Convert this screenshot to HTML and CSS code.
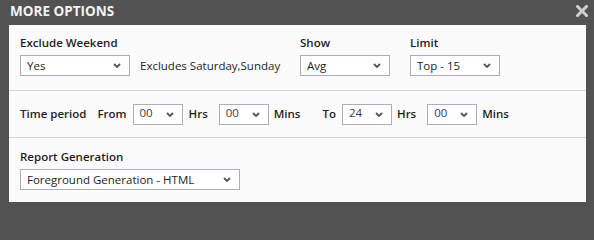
FILE: index.html
```html
<!DOCTYPE html>
<html>
<head>
<meta charset="utf-8">
<link rel="stylesheet" href="styles.css">
</head>
<body>
<div class="dialog">
  <div class="titlebar">
    <span class="title">MORE OPTIONS</span>
    <svg class="close" width="12" height="12" viewBox="0 0 12 12"><path d="M1.5 1.5 L10.5 10.5 M10.5 1.5 L1.5 10.5" stroke="#cfcfcf" stroke-width="3" stroke-linecap="square"/></svg>
  </div>
  <div class="panel">
    <div class="section sec-top">
      <div class="field f-weekend">
        <div class="label">Exclude Weekend</div>
        <div class="inline">
          <div class="select w110"><span>Yes</span><svg class="chev" width="8" height="5" viewBox="0 0 8 5"><path d="M1 1 L4 4 L7 1" fill="none" stroke="#555" stroke-width="1.8"/></svg></div>
          <span class="note">Excludes Saturday,Sunday</span>
        </div>
      </div>
      <div class="field f-show">
        <div class="label">Show</div>
        <div class="select w90"><span>Avg</span><svg class="chev" width="8" height="5" viewBox="0 0 8 5"><path d="M1 1 L4 4 L7 1" fill="none" stroke="#555" stroke-width="1.8"/></svg></div>
      </div>
      <div class="field">
        <div class="label">Limit</div>
        <div class="select w90"><span>Top - 15</span><svg class="chev" width="8" height="5" viewBox="0 0 8 5"><path d="M1 1 L4 4 L7 1" fill="none" stroke="#555" stroke-width="1.8"/></svg></div>
      </div>
    </div>
    <div class="section sec-time">
      <span class="label tp">Time period</span>
      <span class="label from">From</span>
      <div class="select w50"><span class="num">00</span><svg class="chev" width="8" height="5" viewBox="0 0 8 5"><path d="M1 1 L4 4 L7 1" fill="none" stroke="#555" stroke-width="1.8"/></svg></div>
      <span class="label unit">Hrs</span>
      <div class="select w50"><span class="num">00</span><svg class="chev" width="8" height="5" viewBox="0 0 8 5"><path d="M1 1 L4 4 L7 1" fill="none" stroke="#555" stroke-width="1.8"/></svg></div>
      <span class="label unit2">Mins</span>
      <span class="label to">To</span>
      <div class="select w50"><span class="num">24</span><svg class="chev" width="8" height="5" viewBox="0 0 8 5"><path d="M1 1 L4 4 L7 1" fill="none" stroke="#555" stroke-width="1.8"/></svg></div>
      <span class="label unit3">Hrs</span>
      <div class="select w50"><span class="num">00</span><svg class="chev" width="8" height="5" viewBox="0 0 8 5"><path d="M1 1 L4 4 L7 1" fill="none" stroke="#555" stroke-width="1.8"/></svg></div>
      <span class="label unit2">Mins</span>
    </div>
    <div class="section sec-report">
      <div class="label">Report Generation</div>
      <div class="select w220"><span>Foreground Generation - HTML</span><svg class="chev" width="8" height="5" viewBox="0 0 8 5"><path d="M1 1 L4 4 L7 1" fill="none" stroke="#555" stroke-width="1.8"/></svg></div>
    </div>
  </div>
</div>
</body>
</html>
```
FILE: styles.css
```css
html, body {
  margin: 0;
  padding: 0;
  background: #525252;
}
body {
  font-family: "Open Sans", "Noto Sans", "DejaVu Sans", sans-serif;
  font-size: 11.5px;
  color: #1e1e1e;
}
.dialog {
  width: 594px;
  height: 211px;
  background: #525252;
  box-sizing: border-box;
  padding: 0 8px 0 9px;
}
.titlebar {
  height: 25px;
  display: flex;
  align-items: center;
  justify-content: space-between;
  margin-left: 1px;
  margin-right: -2px;
}
.title {
  color: #f2f2f2;
  font-weight: 700;
  font-size: 13.5px;
  line-height: 18px;
  margin-top: -3px;
}
.close {
  margin-top: -3px;
}
.panel {
  background: #fbfbfb;
  height: 177px;
}
.section {
  padding-left: 11px;
  box-sizing: border-box;
}
.sec-top {
  height: 66px;
  display: grid;
  grid-template-columns: 280px 110px auto;
  padding-top: 10px;
  border-bottom: 1px solid #d6d6d6;
}
.sec-time {
  height: 47px;
  display: flex;
  align-items: center;
  border-bottom: 1px solid #d6d6d6;
}
.sec-report {
  padding-top: 11px;
}
.label {
  font-weight: 600;
  line-height: 16px;
  white-space: nowrap;
}
.field .label,
.sec-report .label {
  margin-bottom: 4px;
}
.inline {
  display: flex;
  align-items: center;
}
.note {
  margin-left: 10px;
  white-space: nowrap;
}
.select {
  height: 21px;
  box-sizing: border-box;
  border: 1px solid #a9aeb8;
  background: #fff;
  display: flex;
  align-items: center;
  justify-content: space-between;
  padding: 0 8px 0 6px;
  white-space: nowrap;
}
.select span {
  line-height: 16px;
}
.select .num {
  color: #3a3a4a;
  margin-top: -3px;
  font-weight: 400;
}
.chev {
  display: block;
}
.w110 { width: 110px; }
.w90 { width: 90px; }
.w50 { width: 50px; }
.w220 { width: 220px; }
.tp { margin-right: 11px; }
.from { margin-right: 6px; }
.unit { margin: 0 11px 0 6px; }
.unit2 { margin-left: 5px; }
.to { margin: 0 6px 0 22px; }
.unit3 { margin: 0 11px 0 5px; }
```
